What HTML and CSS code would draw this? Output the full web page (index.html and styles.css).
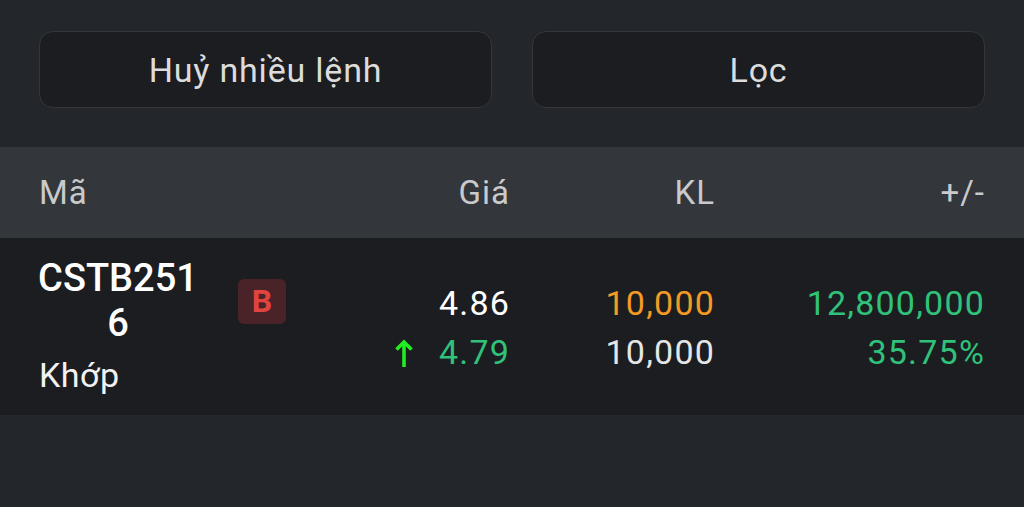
FILE: index.html
```html
<!DOCTYPE html>
<html lang="vi">

<head>
    <meta charset="UTF-8">
    <meta name="viewport" content="width=device-width, initial-scale=1.0">
    <title>Sổ lệnh</title>
    <link rel="stylesheet" href="styles.css">
</head>

<body>

    <!-- hai nút trên cùng -->
    <div class="actions">
        <button class="action-btn">Huỷ nhiều lệnh</button>
        <button class="action-btn">Lọc</button>
    </div>

    <!-- tiêu đề bảng -->
    <div class="grid head">
        <div class="c-name">Mã</div>
        <div class="c-price">Giá</div>
        <div class="c-vol">KL</div>
        <div class="c-diff">+/-</div>
    </div>

    <!-- dòng lệnh -->
    <div class="grid order">
        <div class="c-name">
            <div class="symbol">CSTB2516</div>
            <div class="status">Khớp</div>
        </div>
        <div class="c-side">
            <span class="badge-buy">B</span>
        </div>
        <div class="c-price">
            <div class="val white">4.86</div>
            <div class="val green">
                <svg class="arrow" width="18" height="28" viewBox="0 0 18 28">
                    <path d="M9 28V3M1.5 10.5L9 3 16.5 10.5" fill="none" stroke="#22ec22" stroke-width="3.6" />
                </svg>4.79
            </div>
        </div>
        <div class="c-vol">
            <div class="val orange">10,000</div>
            <div class="val grey">10,000</div>
        </div>
        <div class="c-diff">
            <div class="val green">12,800,000</div>
            <div class="val green">35.75%</div>
        </div>
    </div>

</body>

</html>
```

FILE: styles.css
```css
body {
    margin: 0;
    background-color: #23262a;
    font-family: Roboto, "Noto Sans", sans-serif;
    color: #ffffff;
}

.actions {
    display: flex;
    gap: 40px;
    padding: 31px 39px 39px;
}

.action-btn {
    flex: 1;
    height: 77px;
    background-color: #1b1d20;
    border: 1px solid #33363a;
    border-radius: 14px;
    color: #dcdcdc;
    font-family: Roboto, "Noto Sans", sans-serif;
    font-size: 34px;
    letter-spacing: 0.8px;
}

.grid {
    display: grid;
    grid-template-columns: 160px 111px 200px 205px 270px;
    padding: 0 39px;
}

.head {
    height: 91px;
    align-items: center;
    background-color: #33373b;
    color: #c9cacc;
    font-size: 33px;
    letter-spacing: 1px;
}

.head .c-price {
    grid-column: 3;
}

.c-price,
.c-vol,
.c-diff {
    text-align: right;
}

.order {
    height: 177px;
    background-color: #1b1d20;
}

.symbol {
    margin-top: 18px;
    margin-left: -2px;
    text-align: center;
    font-size: 38px;
    font-weight: 500;
    line-height: 45px;
    word-break: break-all;
}

.status {
    margin-top: 5px;
    font-size: 34px;
    line-height: 49px;
    letter-spacing: 0.5px;
    color: #f2f2f2;
}

.c-side {
    padding: 41px 0 0 39px;
}

.badge-buy {
    display: inline-block;
    width: 48px;
    height: 45px;
    line-height: 45px;
    text-align: center;
    border-radius: 6px;
    background-color: #4a2328;
    color: #e0443f;
    font-size: 32px;
    font-weight: 700;
}

.order .c-price,
.order .c-vol,
.order .c-diff {
    padding-top: 41px;
}

.val {
    font-size: 34px;
    line-height: 49px;
    letter-spacing: 1.2px;
}

.arrow {
    vertical-align: -3px;
    margin-right: 26px;
}

.white {
    color: #ffffff;
}

.grey {
    color: #e6e6e6;
}

.orange {
    color: #f39a24;
}

.green {
    color: #30c27a;
}
```
